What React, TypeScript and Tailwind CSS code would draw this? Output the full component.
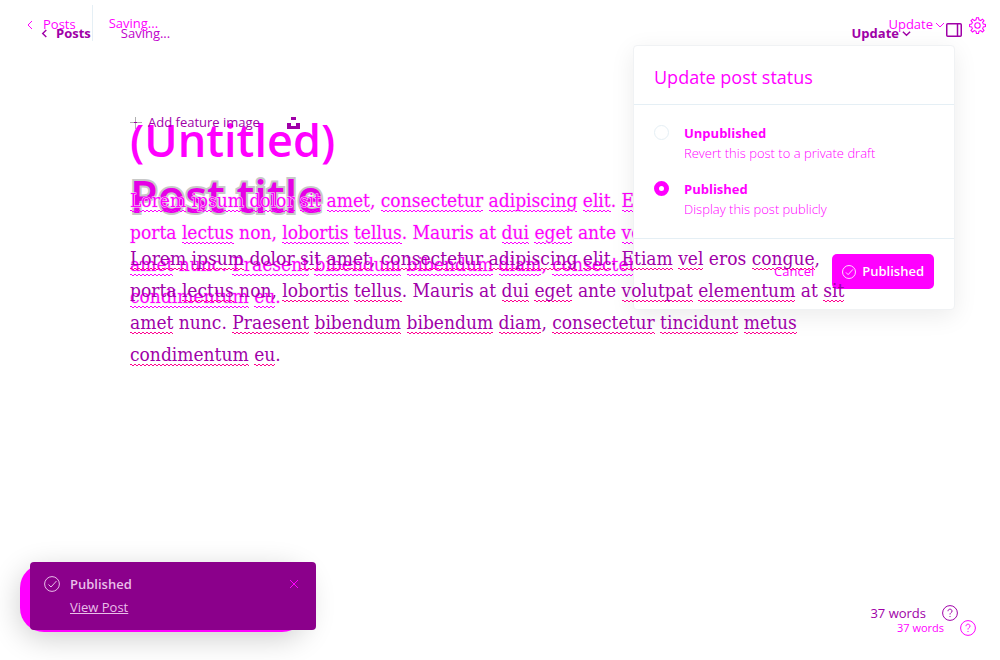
import type { ReactNode } from "react";

const MAGENTA_LINES = [
  "~Lorem ~ipsum ~dolor ~sit ~amet, ~consectetur ~adipiscing ~elit. ~Etiam",
  "porta ~lectus non, ~lobortis ~tellus. Mauris at ~dui ~eget ante ~volutpat",
  "~amet nunc. ~Praesent ~bibendum ~bibendum ~diam, ~consectetur",
  "~condimentum ~eu.",
];

const PURPLE_LINES = [
  "~Lorem ~ipsum dolor ~sit ~amet, ~consectetur ~adipiscing ~elit. ~Etiam ~vel eros ~congue,",
  "porta ~lectus non, ~lobortis ~tellus. Mauris at ~dui ~eget ante ~volutpat ~elementum at ~sit",
  "~amet nunc. ~Praesent ~bibendum ~bibendum ~diam, ~consectetur ~tincidunt ~metus",
  "~condimentum ~eu.",
];

const waveMagenta =
  "pb-px [background:linear-gradient(90deg,#ff00ff_50%,transparent_50%)_0_calc(100%_-_1px)/4px_1px_repeat-x,linear-gradient(90deg,transparent_50%,#ff00ff_50%)_0_100%/4px_1px_repeat-x]";
const wavePurple =
  "pb-px [background:linear-gradient(90deg,#ff0090_50%,transparent_50%)_0_calc(100%_-_1px)/4px_1px_repeat-x,linear-gradient(90deg,transparent_50%,#ff0090_50%)_0_100%/4px_1px_repeat-x]";

function Line({ text, wave }: { text: string; wave: string }) {
  const parts: ReactNode[] = text.split(" ").map((word, i) => {
    const gap = i > 0 ? " " : "";
    if (!word.startsWith("~")) return gap + word;
    const bare = word.slice(1);
    const stem = bare.replace(/[.,]$/, "");
    return (
      <span key={i}>
        {gap}
        <span className={wave}>{stem}</span>
        {bare.slice(stem.length)}
      </span>
    );
  });
  return <span className="block whitespace-nowrap">{parts}</span>;
}

function Paragraph({ lines, wave, className }: { lines: string[]; wave: string; className: string }) {
  return (
    <p className={`relative font-['DejaVu_Serif_Condensed','DejaVu_Serif',serif] text-[19px] leading-8 ${className}`}>
      {lines.map((line) => (
        <Line key={line} text={line} wave={wave} />
      ))}
    </p>
  );
}

function Stroke({ className, d, width = 1 }: { className: string; d: string; width?: number }) {
  return (
    <svg className={className} viewBox="0 0 10 10" fill="none" stroke="currentColor" strokeWidth={width} aria-hidden="true">
      <path d={d} />
    </svg>
  );
}

function CheckCircle({ className }: { className: string }) {
  return (
    <svg className={className} viewBox="0 0 16 16" fill="none" stroke="currentColor" aria-hidden="true">
      <circle cx="8" cy="8" r="7.4" />
      <path d="M4.5 8.5 7 11l5.5-6" />
    </svg>
  );
}

function Gear() {
  return (
    <svg className="size-[17px]" viewBox="0 0 24 24" fill="none" stroke="currentColor" strokeWidth="1.5" aria-hidden="true">
      <circle cx="12" cy="12" r="3.8" />
      <path d="M10 4 10.5 1h3L14 4l2.5 1 2.5-2 2.2 2.2-2 2.5 1 2.3 3 .5v3l-3 .5-1 2.5 2 2.5-2.2 2.2-2.5-2-2.5 1-.5 3h-3l-.5-3-2.5-1-2.5 2L2.8 19l2-2.5-1-2.5-3-.5v-3l3-.5 1-2.3-2-2.5L5 3l2.5 2Z" />
    </svg>
  );
}

function Help() {
  return (
    <svg className="size-4" viewBox="0 0 16 16" fill="none" stroke="currentColor" aria-hidden="true">
      <circle cx="8" cy="8" r="7.4" />
      <path d="M6 6.2C6 3.5 10 3.5 10 6.2 10 7.7 8 7.5 8 9.5M8 11v1" />
    </svg>
  );
}

function Option({ name, note, checked }: { name: string; note: string; checked?: boolean }) {
  return (
    <label className="flex gap-[15px]">
      <input
        type="radio"
        name="status"
        defaultChecked={checked}
        className="size-[15px] shrink-0 appearance-none rounded-full border border-[#e5eff5] bg-white checked:border-[5px] checked:border-[#ff00ff]"
      />
      <span className="flex flex-col">
        <span className="text-[13px] leading-4 font-bold">{name}</span>
        <span className="text-[13px] leading-6 font-light">{note}</span>
      </span>
    </label>
  );
}

function StatusPanel() {
  return (
    <form className="absolute top-[45px] right-[45px] z-20 w-[322px] rounded border border-[#f0f2f4] bg-white shadow-[0_6px_24px_rgba(0,0,0,0.08)]">
      <h2 className="border-b border-[#e5eff5] px-5 pt-[17px] pb-[13px] text-lg leading-7">Update post status</h2>
      <div className="flex flex-col gap-4 px-5 pt-5 pb-[17px]">
        <Option name="Unpublished" note="Revert this post to a private draft" />
        <Option name="Published" note="Display this post publicly" checked />
      </div>
      <div className="flex items-center justify-end gap-[18px] border-t border-[#e5eff5] px-5 pt-[15px] pb-5 text-[13px]">
        <button type="button">Cancel</button>
        <button type="button" className="flex h-[35px] items-center gap-1.5 rounded-[5px] bg-[#ff00ff] px-2.5 font-semibold text-white">
          <CheckCircle className="size-3.5" />
          Published
        </button>
      </div>
    </form>
  );
}

function MagentaLayer() {
  return (
    <div className="relative flex min-h-screen flex-col text-[#ff00ff] [grid-area:1/1]">
      <header className="flex h-[50px] items-center text-[13px]">
        <a href="#posts" className="flex h-9 items-center gap-2 pl-[25px]">
          <Stroke className="size-2.5" d="M7 1 3 5l4 4" />
          Posts
        </a>
        <span className="-mt-1 ml-4 h-9 border-l border-[#e5eff5] pl-4 leading-9">Saving...</span>
        <button type="button" className="mr-6 ml-auto flex items-center gap-0.5">
          Update
          <Stroke className="size-2.5" d="M1 3l4 4 4-4" />
        </button>
        <button type="button" aria-label="Settings" className="mr-[14px]">
          <Gear />
        </button>
      </header>
      <main className="px-[130px] pt-[62px]">
        <h1 className="text-[45px] leading-[56px] font-semibold">(Untitled)</h1>
        <Paragraph className="z-10 pt-4 [-webkit-text-stroke:1px_#f4e4f4] [paint-order:stroke]" lines={MAGENTA_LINES} wave={waveMagenta} />
      </main>
      <footer className="mt-auto flex items-end justify-between pr-6 pb-6 pl-5">
        <div className="mb-1 h-[68px] w-[286px] rounded-[24px] bg-[#ff00ff] shadow-[0_6px_30px_rgba(0,0,0,0.2)]" />
        <div className="flex items-center gap-4 text-[11px] leading-4">
          37 words
          <Help />
        </div>
      </footer>
      <StatusPanel />
    </div>
  );
}

function PurpleLayer() {
  return (
    <div className="flex min-h-screen flex-col text-[#a000a8] [grid-area:1/1]">
      <header className="relative flex h-[67px] items-center pr-[38px] pl-10 text-[13px]">
        <a href="#posts" className="flex items-center gap-[7px] font-bold">
          <Stroke className="size-[9px]" d="M7 1 3 5l4 4" width={1.6} />
          Posts
        </a>
        <span className="ml-[30px] text-[#c000cc]">Saving...</span>
        <button type="button" className="ml-auto flex items-center gap-[3px] font-bold">
          Update
          <Stroke className="size-[9px]" d="M1 3l4 4 4-4" width={1.6} />
        </button>
        <button type="button" aria-label="Toggle sidebar" className="ml-[35px] pb-2">
          <svg className="h-3.5 w-4" viewBox="0 0 16 14" fill="none" stroke="currentColor" strokeWidth="1.5" aria-hidden="true">
            <rect x=".75" y=".75" width="14.5" height="12.5" rx="1" />
            <path d="M11.5 1v12" />
          </svg>
        </button>
      </header>
      <main className="px-[130px] pt-[46px]">
        <button type="button" className="relative flex h-5 items-center text-[13px]">
          <svg className="mr-1.5 size-3" viewBox="0 0 12 12" stroke="#b0b0b0" aria-hidden="true">
            <path d="M0 5.5h12M5.5 0v12" />
            <path d="M4 5.5h3" stroke="currentColor" />
          </svg>
          Add feature image
          <svg className="ml-[27px] size-[13px]" viewBox="0 0 13 13" fill="currentColor" aria-hidden="true">
            <path d="M4 0h5v3H4ZM0 6h4v3h5V6h4v6H0Z" />
          </svg>
        </button>
        <h2 className="relative mt-[35px] text-[45px] leading-[56px] font-semibold text-[#e600e6] [-webkit-text-stroke:4px_#c8c8c8] [paint-order:stroke]">Post title</h2>
        <Paragraph className="z-30 pt-[18px]" lines={PURPLE_LINES} wave={wavePurple} />
      </main>
      <footer className="relative mt-auto flex items-end justify-between pr-[42px] pb-[30px] pl-[30px]">
        <div className="flex h-[68px] w-[286px] gap-2.5 rounded bg-[#8b008b] px-3.5 pt-3.5 text-[13px] leading-4 text-[#e9bfe9]">
          <CheckCircle className="size-4" />
          <div className="flex flex-col gap-[7px]">
            <strong className="font-semibold">Published</strong>
            <a href="#post" className="underline">View Post</a>
          </div>
          <button type="button" aria-label="Close" className="mr-[3px] ml-auto self-start pt-[3px] text-[#ff00ff]">
            <Stroke className="size-2.5" d="M1 1l8 8M9 1 1 9" />
          </button>
        </div>
        <div className="mb-[9px] flex items-center gap-4 text-[13px] leading-4">
          37 words
          <Help />
        </div>
      </footer>
    </div>
  );
}

export default function App() {
  return (
    <div className="grid min-h-screen grid-cols-1 overflow-hidden bg-white font-['Open_Sans',sans-serif]">
      <MagentaLayer />
      <PurpleLayer />
    </div>
  );
}
